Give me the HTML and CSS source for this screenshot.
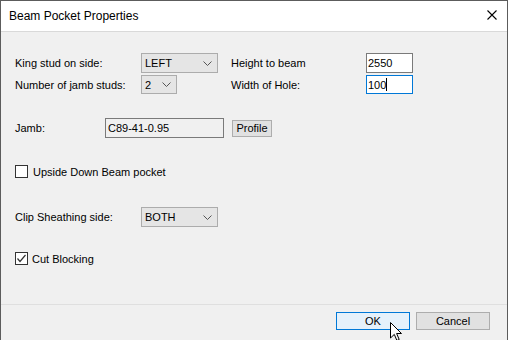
FILE: index.html
```html
<!DOCTYPE html>
<html lang="en">
<head>
    <meta charset="UTF-8">
    <title>Beam Pocket Properties</title>
    <link rel="stylesheet" href="styles.css">
</head>
<body>
    <div id="window">
        <div class="titlebar">
            <span class="title">Beam Pocket Properties</span>
            <svg class="close" width="10" height="10" viewBox="0 0 10 10">
                <path d="M0.5 0.5 L9.5 9.5 M9.5 0.5 L0.5 9.5" stroke="#000" stroke-width="1.1" fill="none"/>
            </svg>
        </div>

        <div class="content">
            <div class="row">
                <span class="label">King stud on side:</span>
                <div class="cell">
                    <div class="combo wide">
                        <span>LEFT</span>
                        <svg width="9" height="5" viewBox="0 0 9 5"><polyline points="0.5,0.5 4.5,4.5 8.5,0.5" fill="none" stroke="#555"/></svg>
                    </div>
                </div>
                <span class="label right-label">Height to beam</span>
                <div class="textbox small">2550</div>
            </div>
            <div class="row second">
                <span class="label">Number of jamb studs:</span>
                <div class="cell">
                    <div class="combo narrow">
                        <span>2</span>
                        <svg width="9" height="5" viewBox="0 0 9 5"><polyline points="0.5,0.5 4.5,4.5 8.5,0.5" fill="none" stroke="#555"/></svg>
                    </div>
                </div>
                <span class="label right-label">Width of Hole:</span>
                <div class="textbox small focused">100<span class="caret"></span></div>
            </div>

            <div class="row jamb">
                <span class="label short">Jamb:</span>
                <div class="textbox readonly">C89-41-0.95</div>
                <button class="btn profile">Profile</button>
            </div>

            <div class="row check upside">
                <span class="box"></span>
                <span class="check-label">Upside Down Beam pocket</span>
            </div>

            <div class="row clip">
                <span class="label">Clip Sheathing side:</span>
                <div class="combo wide">
                    <span>BOTH</span>
                    <svg width="9" height="5" viewBox="0 0 9 5"><polyline points="0.5,0.5 4.5,4.5 8.5,0.5" fill="none" stroke="#555"/></svg>
                </div>
            </div>

            <div class="row check cut">
                <span class="box">
                    <svg width="11" height="11" viewBox="0 0 11 11"><polyline points="1.5,5.5 4,8.5 9.5,2" fill="none" stroke="#333" stroke-width="1.2"/></svg>
                </span>
                <span class="check-label tight">Cut Blocking</span>
            </div>
        </div>

        <div class="footer">
            <button class="btn ok">OK</button>
            <button class="btn cancel">Cancel</button>
        </div>

        <!-- mouse pointer over the OK button -->
        <svg class="cursor" width="13" height="20" viewBox="0 0 13 20">
            <path d="M0.5 0.5 L0.5 16 L4.3 12.4 L6.9 18.5 L9.2 17.5 L6.6 11.5 L11.5 11.5 Z" fill="#fff" stroke="#000" stroke-width="1"/>
        </svg>
    </div>
</body>
</html>
```

FILE: styles.css
```css
* {
    margin: 0;
    padding: 0;
    box-sizing: border-box;
}

body {
    font-family: "Liberation Sans", Arial, sans-serif;
    font-size: 11px;
    color: #000;
    background: #f0f0f0;
}

#window {
    position: relative;
    width: 508px;
    height: 340px;
    border: 1px solid #5c5c5c;
    border-bottom: none;
    background-color: #f0f0f0;
    display: flex;
    flex-direction: column;
}

.titlebar {
    height: 31px;
    background-color: #fff;
    border-bottom: 1px solid #d9d9d9;
    display: flex;
    align-items: center;
    justify-content: space-between;
    padding: 0 10px 0 8px;
}

.title {
    font-size: 12px;
    margin-top: -1px;
}

.close {
    margin-top: -2px;
}

.content {
    flex: 1;
    padding: 21px 0 0 14px;
}

.row {
    display: flex;
    align-items: center;
    height: 20px;
}

.row.second {
    margin-top: 2px;
    height: 19px;
}

.label {
    width: 126px;
    flex-shrink: 0;
}

.label.short {
    width: 90px;
}

.cell {
    width: 77px;
    height: 100%;
    flex-shrink: 0;
}

.right-label {
    width: 135px;
    margin-left: 13px;
}

.combo {
    height: 100%;
    background-color: #e5e5e5;
    border: 1px solid #acacac;
    display: flex;
    align-items: center;
    justify-content: space-between;
    padding: 0 5px 0 3px;
}

.combo.wide {
    width: 77px;
}

.combo.narrow {
    width: 36px;
}

.textbox {
    height: 100%;
    background-color: #fff;
    border: 1px solid #7a7a7a;
    display: flex;
    align-items: center;
    padding-left: 1px;
}

.textbox.small {
    width: 47px;
}

.textbox.focused {
    border-color: #0078d7;
}

.caret {
    display: inline-block;
    width: 1px;
    height: 13px;
    background: #000;
}

.row.jamb {
    margin-top: 24px;
}

.textbox.readonly {
    width: 119px;
    background-color: #f0f0f0;
    padding-left: 2px;
}

.btn {
    font-family: "Liberation Sans", Arial, sans-serif;
    font-size: 11px;
    color: #000;
    background-color: #e1e1e1;
    border: 1px solid #adadad;
}

.btn.profile {
    margin-left: 8px;
    width: 40px;
    height: 17px;
}

.row.check {
    height: 13px;
}

.box {
    width: 13px;
    height: 13px;
    border: 1px solid #333;
    background-color: #fff;
    display: flex;
    align-items: center;
    justify-content: center;
}

.check-label {
    margin-left: 5px;
}

.check-label.tight {
    margin-left: 4px;
}

.row.upside {
    margin-top: 27px;
}

.row.clip {
    margin-top: 29px;
}

.row.cut {
    margin-top: 25px;
}

.footer {
    height: 36px;
    border-top: 1px solid #dfdfdf;
    display: flex;
    justify-content: flex-end;
    gap: 6px;
    padding: 7px 17px 0 0;
}

.footer .btn {
    width: 74px;
    height: 18px;
}

.btn.ok {
    background-color: #e5f1fb;
    border-color: #0078d7;
}

.cursor {
    position: absolute;
    left: 389px;
    top: 321px;
}
```
